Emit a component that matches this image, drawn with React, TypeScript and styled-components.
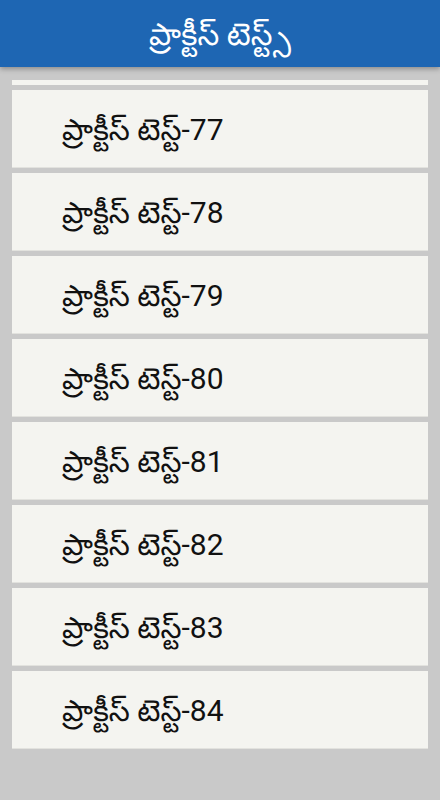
import React from 'react';
import styled, { createGlobalStyle } from 'styled-components';

const tests = [77, 78, 79, 80, 81, 82, 83, 84];

const GlobalStyle = createGlobalStyle`
  html, body {
    margin: 0;
    padding: 0;
    background: #c9c9c9;
  }
  * {
    box-sizing: border-box;
  }
`;

const App: React.FC = () => {
  return (
    <Screen>
      <GlobalStyle />
      <Header>
        <Title>ప్రాక్టీస్ టెస్ట్స్</Title>
      </Header>

      <List>
        <PartialCard />
        {tests.map((n) => (
          <Card key={n}>
            <CardLabel>ప్రాక్టీస్ టెస్ట్-{n}</CardLabel>
          </Card>
        ))}
      </List>
    </Screen>
  );
};

const Screen = styled.div`
  width: 440px;
  height: 800px;
  overflow: hidden;
  display: flex;
  flex-direction: column;
  background-color: #c9c9c9;
  font-family: Roboto, 'Noto Sans Telugu', 'Noto Sans', sans-serif;
`;

const Header = styled.header`
  height: 67px;
  flex-shrink: 0;
  display: flex;
  align-items: center;
  justify-content: center;
  padding-top: 2px;
  background-color: #1e66b3;
  box-shadow: 0 2px 5px rgba(0, 0, 0, 0.3);
  position: relative;
  z-index: 1;
`;

const Title = styled.h1`
  margin: 0;
  font-size: 31px;
  font-weight: 400;
  color: #ffffff;
  line-height: 1;
`;

const List = styled.main`
  display: flex;
  flex-direction: column;
  gap: 5px;
  padding: 13px 12px 0;
`;

const PartialCard = styled.div`
  height: 5px;
  background-color: #f4f4f0;
`;

const Card = styled.div`
  height: 78px;
  flex-shrink: 0;
  display: flex;
  align-items: center;
  padding: 3px 0 0 50px;
  background-color: #f4f4f0;
  border-bottom: 1px solid #e2e2de;
`;

const CardLabel = styled.span`
  font-size: 30px;
  color: #111111;
  line-height: 1;
`;

export default App;
